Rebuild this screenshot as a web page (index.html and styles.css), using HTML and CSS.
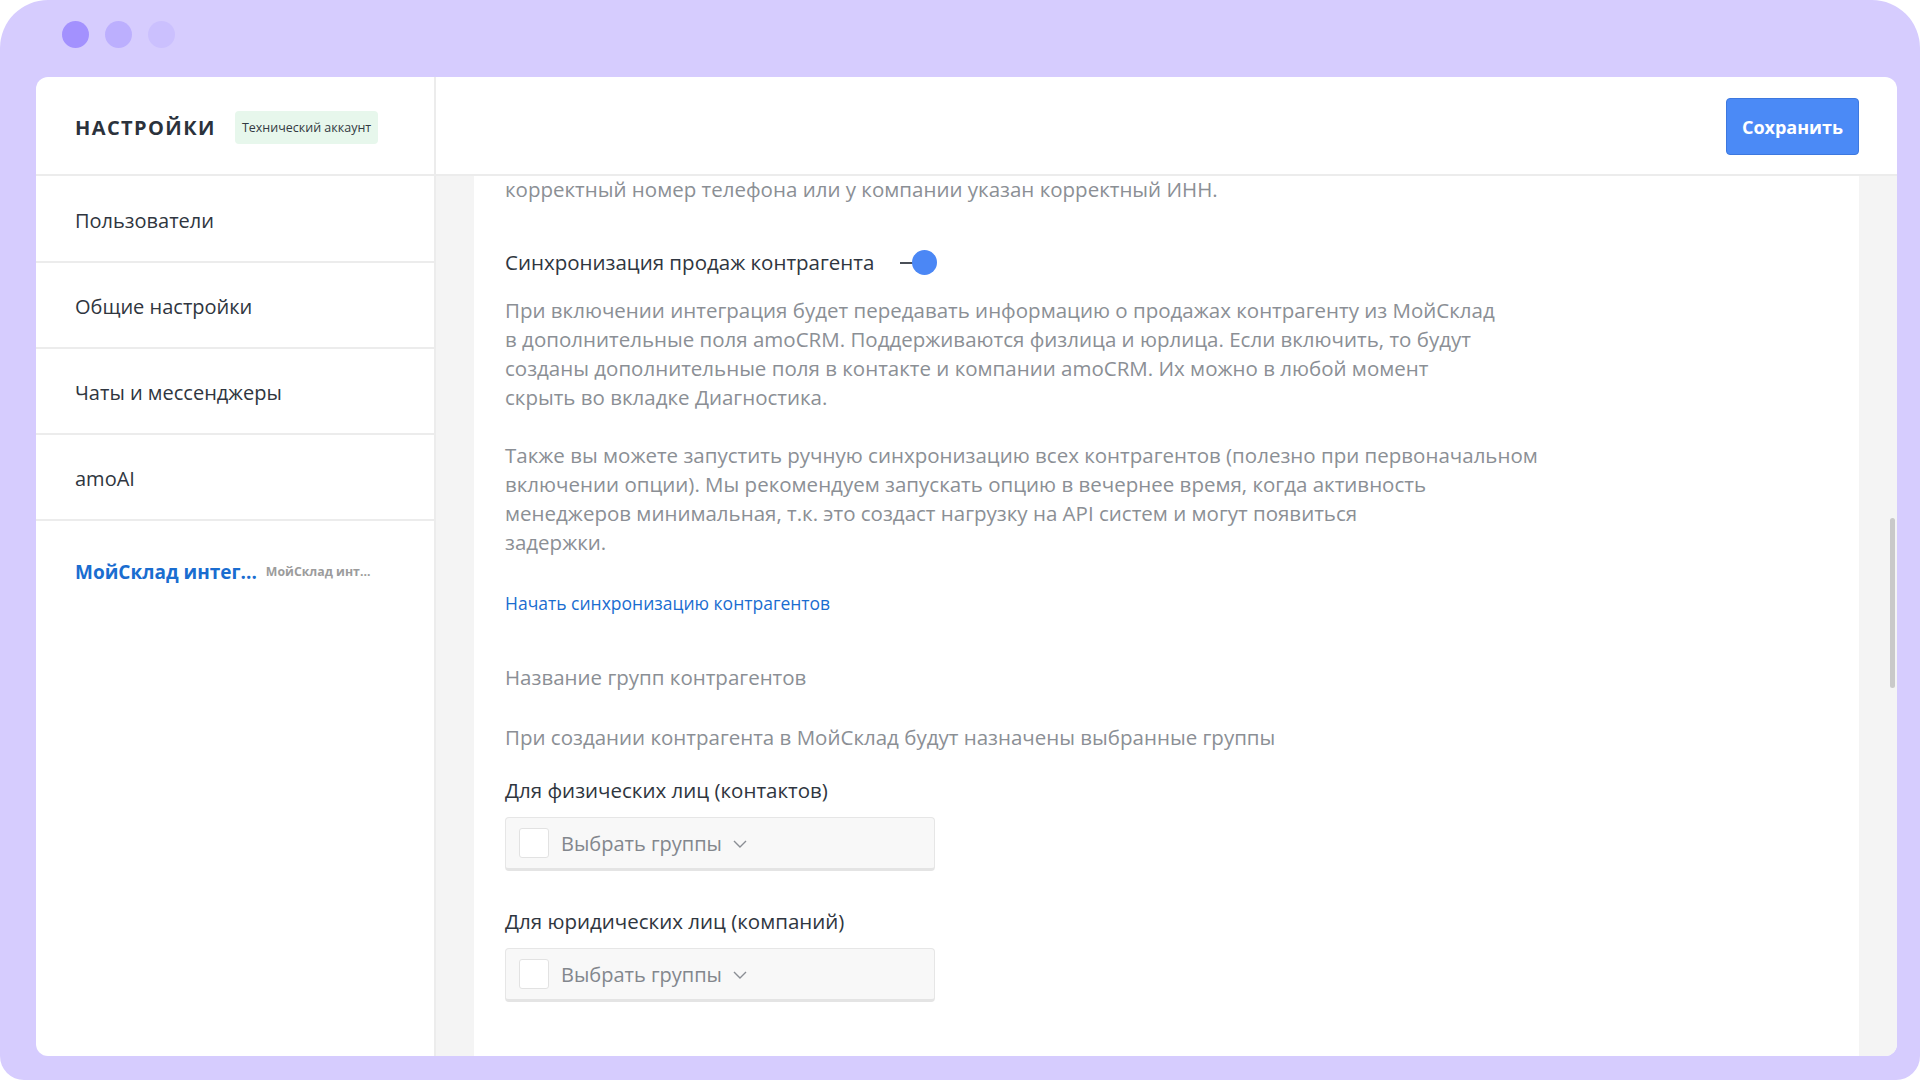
FILE: index.html
```html
<!DOCTYPE html>
<html lang="ru">
<head>
<meta charset="utf-8">
<title>Настройки</title>
<link rel="stylesheet" href="styles.css">
</head>
<body>
<div class="frame">
  <div class="titlebar">
    <span class="dot dot-1"></span>
    <span class="dot dot-2"></span>
    <span class="dot dot-3"></span>
  </div>
  <div class="window">
    <aside class="sidebar">
      <div class="side-head">
        <h1 class="side-title">НАСТРОЙКИ</h1>
        <span class="badge">Технический аккаунт</span>
      </div>
      <nav class="menu">
        <div class="menu-item">Пользователи</div>
        <div class="menu-item">Общие настройки</div>
        <div class="menu-item">Чаты и мессенджеры</div>
        <div class="menu-item">amoAI</div>
        <div class="menu-item menu-item-active">
          <span class="menu-active-name">МойСклад интег...</span>
          <span class="menu-sub">МойСклад инт...</span>
        </div>
      </nav>
    </aside>
    <main class="main">
      <div class="main-head">
        <button class="btn-save">Сохранить</button>
      </div>
      <div class="main-body">
        <div class="card">
          <p class="muted first-line">корректный номер телефона или у компании указан корректный ИНН.</p>

          <div class="toggle-row">
            <span class="label">Синхронизация продаж контрагента</span>
            <span class="toggle"><span class="toggle-line"></span><span class="toggle-knob"></span></span>
          </div>

          <p class="muted para-1">При включении интеграция будет передавать информацию о продажах контрагенту из МойСклад<br>в дополнительные поля amoCRM. Поддерживаются физлица и юрлица. Если включить, то будут<br>созданы дополнительные поля в контакте и компании amoCRM. Их можно в любой момент<br>скрыть во вкладке Диагностика.</p>

          <p class="muted para-2">Также вы можете запустить ручную синхронизацию всех контрагентов (полезно при первоначальном<br>включении опции). Мы рекомендуем запускать опцию в вечернее время, когда активность<br>менеджеров минимальная, т.к. это создаст нагрузку на API систем и могут появиться<br>задержки.</p>

          <a class="link">Начать синхронизацию контрагентов</a>

          <p class="muted group-title">Название групп контрагентов</p>
          <p class="muted group-desc">При создании контрагента в МойСклад будут назначены выбранные группы</p>

          <div class="field">
            <div class="label field-label">Для физических лиц (контактов)</div>
            <div class="select">
              <span class="checkbox"></span>
              <span class="select-text">Выбрать группы</span>
              <svg class="chevron" width="14" height="8" viewBox="0 0 14 8"><path d="M1 1l6 6 6-6" fill="none" stroke="#8a8e94" stroke-width="1.4"/></svg>
            </div>
          </div>

          <div class="field field-2">
            <div class="label field-label">Для юридических лиц (компаний)</div>
            <div class="select">
              <span class="checkbox"></span>
              <span class="select-text">Выбрать группы</span>
              <svg class="chevron" width="14" height="8" viewBox="0 0 14 8"><path d="M1 1l6 6 6-6" fill="none" stroke="#8a8e94" stroke-width="1.4"/></svg>
            </div>
          </div>
        </div>
        <div class="scrollbar"></div>
      </div>
    </main>
  </div>
</div>
</body>
</html>
```

FILE: styles.css
```css
* { box-sizing: border-box; }

html, body {
  margin: 0;
  padding: 0;
  background: #ffffff;
}

body {
  font-family: "Open Sans", "Noto Sans", sans-serif;
  color: #2f3640;
  width: 1920px;
  height: 1080px;
  overflow: hidden;
}

.frame {
  width: 1920px;
  height: 1080px;
  background: #d6ccfe;
  border-radius: 48px 48px 24px 24px;
  display: flex;
  flex-direction: column;
  padding: 0 23px 24px 36px;
}

.titlebar {
  height: 77px;
  flex: none;
  display: flex;
  gap: 16px;
  padding: 21px 0 0 26px;
}

.dot {
  width: 27px;
  height: 27px;
  border-radius: 50%;
  display: block;
}
.dot-1 { background: #a391fe; }
.dot-2 { background: #bcaffe; }
.dot-3 { background: #cbc0fe; }

.window {
  flex: 1;
  background: #ffffff;
  border-radius: 12px;
  overflow: hidden;
  display: flex;
  min-height: 0;
}

/* Sidebar */
.sidebar {
  width: 400px;
  flex: none;
  border-right: 2px solid #ececec;
  display: flex;
  flex-direction: column;
}

.side-head {
  height: 99px;
  border-bottom: 2px solid #ececec;
  display: flex;
  align-items: center;
  padding: 3px 0 0 39px;
  gap: 19px;
}

.side-title {
  margin: 0;
  font-size: 20px;
  font-weight: 700;
  letter-spacing: 1.4px;
  color: #2b323c;
}

.badge {
  font-size: 12.5px;
  color: #333a42;
  background: #e7f7ec;
  border-radius: 4px;
  height: 33px;
  line-height: 33px;
  padding: 0 7px;
}

.menu-item {
  height: 86px;
  border-bottom: 2px solid #ececec;
  display: flex;
  align-items: center;
  padding: 3px 0 0 39px;
  font-size: 20px;
  color: #2f3640;
}

.menu-item:first-child { height: 87px; }

.menu-item-active {
  border-bottom: none;
  height: 98px;
  gap: 9px;
}

.menu-active-name {
  color: #1a6dd0;
  font-weight: 700;
  font-size: 19px;
}

.menu-sub {
  color: #9c9c9c;
  font-weight: 700;
  font-size: 12.3px;
}

/* Main */
.main {
  flex: 1;
  display: flex;
  flex-direction: column;
  min-width: 0;
}

.main-head {
  height: 99px;
  flex: none;
  border-bottom: 2px solid #ececec;
  display: flex;
  align-items: center;
  justify-content: flex-end;
  padding: 2px 38px 0 0;
}

.btn-save {
  width: 133px;
  height: 57px;
  background: #4b8af6;
  border: 1px solid #3d78df;
  border-radius: 4px;
  color: #ffffff;
  font-family: "Open Sans", "Noto Sans", sans-serif;
  font-weight: 700;
  font-size: 18px;
  padding: 0;
}

.main-body {
  flex: 1;
  background: #f4f4f4;
  padding: 0 38px;
  position: relative;
  display: flex;
  min-height: 0;
}

.card {
  flex: 1;
  background: #ffffff;
  padding: 0 31px;
  font-size: 20.5px;
  line-height: 29px;
}

.card p { margin: 0; }

.muted { color: #8b8f95; }

.label { color: #2f3640; }

.first-line { margin-top: -1px !important; }

.toggle-row {
  margin-top: 44px;
  display: flex;
  align-items: center;
  gap: 26px;
  height: 29px;
}

.toggle {
  position: relative;
  width: 37px;
  height: 25px;
  display: block;
}

.toggle-line {
  position: absolute;
  left: 0;
  top: 12px;
  width: 16px;
  height: 2px;
  background: #4a4f57;
}

.toggle-knob {
  position: absolute;
  right: 0;
  top: 0;
  width: 25px;
  height: 25px;
  border-radius: 50%;
  background: #4b87f5;
}

.para-1 { margin-top: 19px !important; }
.para-2 { margin-top: 29px !important; }

.link {
  display: block;
  margin-top: 32px;
  color: #1a6dd0;
  font-size: 17.5px;
  line-height: 29px;
  text-decoration: none;
}

.group-title { margin-top: 45px !important; }
.group-desc { margin-top: 31px !important; }

.field { margin-top: 24px; }
.field-2 { margin-top: 36px; }

.field-label { height: 29px; }

.select {
  margin-top: 12px;
  width: 430px;
  height: 54px;
  background: #f8f8f8;
  border: 1px solid #e6e6e6;
  border-bottom: 3px solid #e4e4e4;
  border-radius: 4px;
  display: flex;
  align-items: center;
  padding-left: 13px;
}

.checkbox {
  width: 30px;
  height: 30px;
  background: #ffffff;
  border: 1px solid #e2e2e2;
  border-radius: 3px;
  flex: none;
}

.select-text {
  margin-left: 12px;
  color: #83878d;
  font-size: 20px;
}

.chevron {
  margin-left: 11px;
  margin-top: 2px;
}

.scrollbar {
  position: absolute;
  right: 2px;
  top: 342px;
  width: 5px;
  height: 170px;
  border-radius: 3px;
  background: #c9c9c9;
}
```
